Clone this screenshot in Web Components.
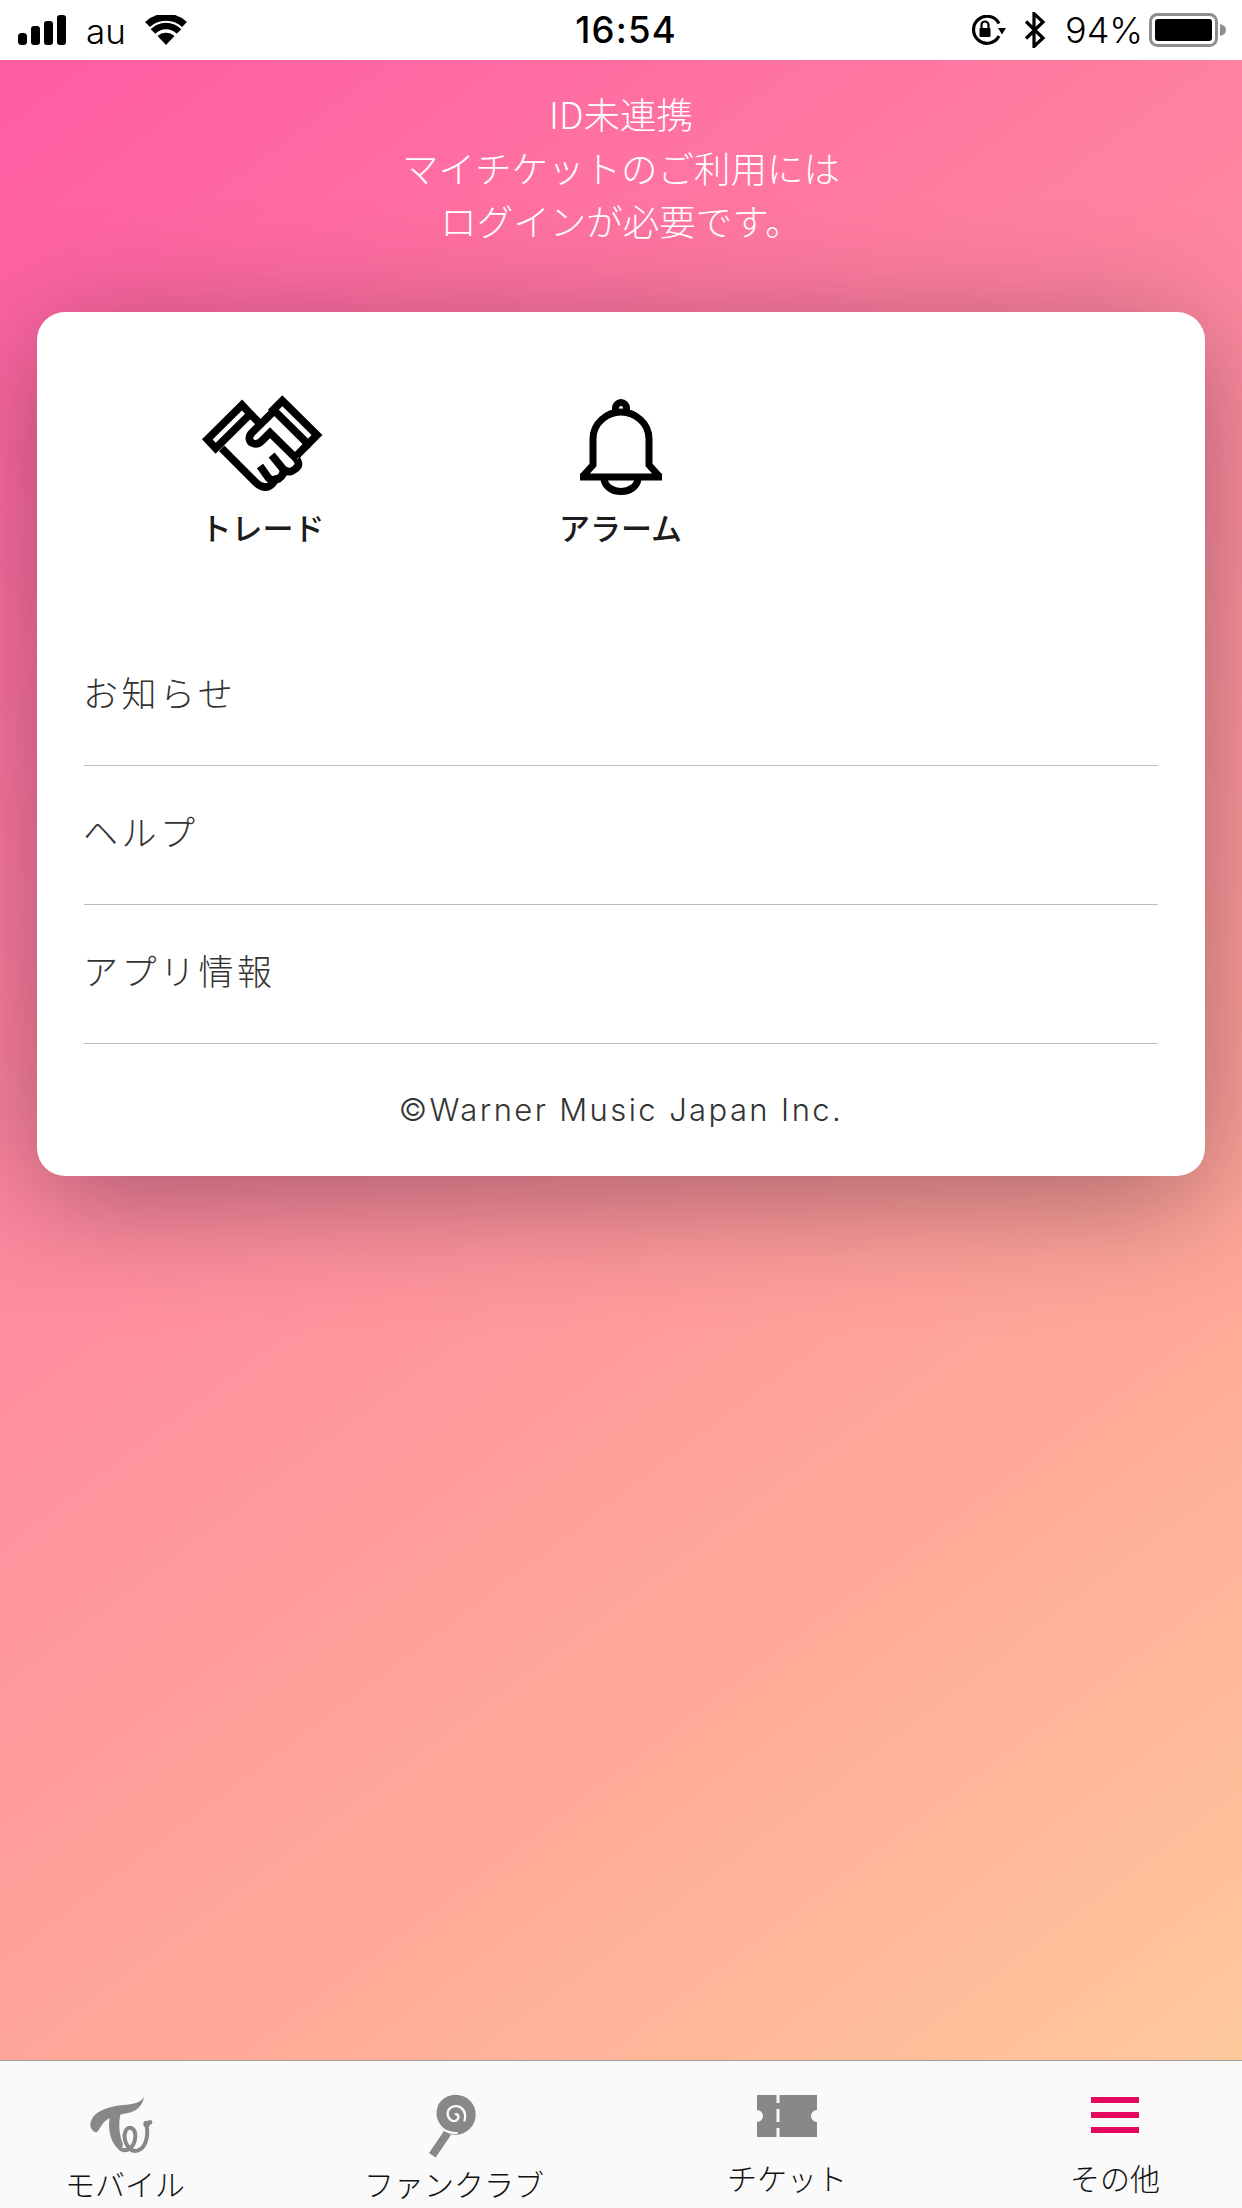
<!DOCTYPE html>
<html lang="ja"><head><meta charset="utf-8"><title>その他</title>
<style>html,body{margin:0;padding:0;background:#fff}</style></head>
<body>
<app-screen>
  <status-bar slot="status"></status-bar>
  <login-note slot="note">ID未連携<br>マイチケットのご利用には<br>ログインが必要です。</login-note>
  <menu-card slot="card">
    <shortcut-item slot="shortcut" label="トレード" icon="trade"></shortcut-item>
    <shortcut-item slot="shortcut" label="アラーム" icon="bell"></shortcut-item>
    <menu-row>お知らせ</menu-row>
    <menu-row>ヘルプ</menu-row>
    <menu-row>アプリ情報</menu-row>
    <span slot="copyright">©Warner Music Japan Inc.</span>
  </menu-card>
  <tab-bar slot="tabs"></tab-bar>
</app-screen>
<script>
const FONT = '"Noto Sans CJK JP","Noto Sans",sans-serif';
const def = (name, html, init) => customElements.define(name, class extends HTMLElement {
  constructor(){ super(); this.attachShadow({mode:'open'}).innerHTML = typeof html === 'function' ? html(this) : html; }
  connectedCallback(){ if(init) init(this); }
});

const ICONS = {
 trade:`<svg width="140" height="112" viewBox="0 0 420 336" fill="none" stroke="#000" stroke-width="23" stroke-linejoin="miter">
  <path d="M147 60 43 163 68 190 172 87Z"/>
  <path d="M268 47 372 150 345 177 241 74Z"/>
  <path d="M172 87 196 111"/>
  <path d="M243 78 178 142C164 156 168 170 180 175C190 179 198 176 206 168L231 143 311 222"/>
  <path d="M345 177 311 212"/>
  <path d="M86 190 190 294C206 310 226 310 238 296C248 284 252 278 250 270"/>
  <path d="M311 222C320 236 316 246 304 254C292 264 280 260 270 252L236 210"/>
  <path d="M270 252C274 266 268 274 256 282C242 288 232 284 226 278L201 243"/>
 </svg>`,
 bell:`<svg width="82" height="96" viewBox="0 0 82 96" fill="none" stroke="#000" stroke-width="7">
  <path d="M35.500 15V9A5.500 5.500 0 0 1 46.500 9V15"/>
  <path d="M0 78H82M3 77 13 66V40C13 24 27 13 41 13S69 24 69 40V66L79 77"/>
  <path d="M24 80C25 88 33 92.500 41 92.500S57 88 58 80"/>
 </svg>`,
 tw:`<svg width="85" height="70" viewBox="0 0 255 210" fill="#888" stroke="none">
  <path d="M198 20C194 48 176 64 146 70C112 76 86 84 72 104C64 116 60 126 53 127C38 120 32 104 42 86C58 60 95 50 130 46C160 42 186 42 198 20Z"/>
  <path d="M100 60 132 54C120 90 122 130 134 160C138 174 122 182 112 168C92 140 88 100 100 60Z"/>
  <path fill="none" stroke="#888" stroke-width="12" d="M122 170C140 192 170 176 172 140C173 112 150 105 142 125C134 148 150 188 178 182C202 176 212 140 206 108"/>
  <circle cx="206" cy="102" r="10"/><circle cx="216" cy="97" r="7"/>
 </svg>`,
 candy:`<svg width="75" height="72" viewBox="0 0 225 216" fill="none">
  <circle cx="122" cy="74" r="60" fill="#888"/>
  <path d="M98 128 52 196" stroke="#888" stroke-width="24"/>
  <path d="M66 44C50 92 82 134 128 128" stroke="#fafafa" stroke-width="6"/>
  <path d="M120 74C126 68 134 78 128 88C118 100 100 90 98 74C96 54 118 42 136 52C150 60 154 78 148 94" stroke="#fafafa" stroke-width="7"/>
 </svg>`,
 ticket:`<svg width="60" height="42" viewBox="0 0 60 42">
  <path fill="#888" d="M0 0H60V15A6 6 0 0 0 60 27V42H0V27A6 6 0 0 0 0 15Z"/>
  <path fill="#fafafa" d="M19.500 0H22.500V8H19.500ZM19.500 14H22.500V27H19.500ZM19.500 33H22.500V42H19.500Z"/>
 </svg>`,
 menu:`<svg width="48" height="36" viewBox="0 0 48 36" fill="#e5085f"><rect width="48" height="6"/><rect y="15" width="48" height="6"/><rect y="30" width="48" height="6"/></svg>`
};

def('app-screen', `<style>
 :host{display:flex;flex-direction:column;width:1242px;height:2208px;overflow:hidden;background:#fff}
 main{flex:1;display:flex;flex-direction:column;align-items:stretch;background:linear-gradient(143deg,#ff5ea3 2%,#ff8e9f 44%,#ffaa98 74%,#ffc99c 100%);}
</style><slot name="status"></slot><main><slot name="note"></slot><slot name="card"></slot></main><slot name="tabs"></slot>`);

def('status-bar', `<style>
 :host{display:grid;grid-template-columns:1fr auto 1fr;align-items:center;height:60px;padding:0 15px 0 18px;background:#fff;color:#000;font:300 36px Inter,sans-serif}
 .l,.r{display:flex;align-items:center}
 .r{justify-content:flex-end}
 .time{font:500 36.500px Inter,sans-serif;letter-spacing:1.200px;margin-left:7px}
 .au{font-size:35px;margin:0 19px 0 20px;line-height:60px;position:relative;top:1px}
 .pct{margin:0 6px 0 19px}
 svg{display:block}
</style>
<div class="l">
 <svg width="48" height="30" viewBox="0 0 48 30"><rect x="0" y="18" width="9" height="12" rx="3.500"/><rect x="13" y="11" width="9" height="19" rx="3"/><rect x="26" y="6" width="9" height="24" rx="3"/><rect x="39" y="0" width="9" height="30" rx="3"/></svg>
 <span class="au">au</span>
 <svg width="42" height="30" viewBox="0 0 42 30"><path d="M21 30 12.500 21A12.500 12.500 0 0 1 29.500 21Z"/><path fill="none" stroke="#000" stroke-width="6.500" d="M8 16.500A18 18 0 0 1 34 16.500"/><path fill="none" stroke="#000" stroke-width="7" d="M2.500 9.500A27 27 0 0 1 39.500 9.500"/></svg>
</div>
<div class="time">16:54</div>
<div class="r">
 <svg width="36" height="30" viewBox="0 0 36 30" fill="none" stroke="#000" stroke-width="3.200"><path d="M29 21A13.500 13.500 0 1 1 29 8.500"/><path fill="#000" stroke="none" d="M28 12H36L32 18.500Z" transform="translate(0,1)"/><rect x="9.500" y="13" width="11" height="9" fill="#000" stroke="none" rx="1"/><path stroke-width="2.200" d="M11.500 13.500V10A3.500 3.500 0 0 1 18.500 10V13.500"/></svg>
 <svg style="margin-left:18px" width="22" height="36" viewBox="0 0 22 36" fill="none" stroke="#000" stroke-width="3.200"><path d="M2 9.500 19 26 10 34.500V1.500L19 10 2 26.500"/></svg>
 <span class="pct">94%</span>
 <svg width="78" height="34" viewBox="0 0 78 34"><rect x="1.500" y="1.500" width="66" height="31" rx="7" fill="none" stroke="#8e8e8e" stroke-width="3"/><rect x="6" y="6" width="57" height="22" rx="3"/><path fill="#8e8e8e" d="M71 11C75 12 77 14 77 17S75 22 71 23Z"/></svg>
</div>`);

def('login-note', `<style>
 :host{display:block;height:252px;box-sizing:border-box;padding-top:27px;text-align:center;color:#fff;font:300 36.500px/53.500px ${FONT}}
</style><slot></slot>`);

def('menu-card', `<style>
 :host{display:block;margin:0 37px;height:864px;box-sizing:border-box;padding:0 47px;background:#fff;border-radius:28px;box-shadow:0 22px 120px rgba(50,20,40,.44);color:#333;font-family:${FONT}}
 .shortcuts{display:grid;grid-template-columns:repeat(3,1fr);height:315px;padding-top:83px;box-sizing:border-box;align-items:start}
 .copy{display:block;text-align:center;font:300 31px/131px Inter,${FONT};letter-spacing:2.400px}
</style>
<div class="shortcuts"><slot name="shortcut"></slot></div>
<slot></slot>
<div class="copy"><slot name="copyright"></slot></div>`);

def('shortcut-item', (el)=>`<style>
 :host{display:flex;flex-direction:column;align-items:center;color:#1c1c1c}
 .i{height:112px;display:flex;align-items:flex-start;justify-content:center}
 .t{font:500 31px/40px ${FONT};margin-left:-1px}
 .trade{margin-top:-10px}
 .bell{margin-top:4px}
</style><div class="i"><div class="${el.getAttribute('icon')}">${ICONS[el.getAttribute('icon')]}</div></div><div class="t">${el.getAttribute('label')}</div>`);

def('menu-row', `<style>
 :host{display:flex;align-items:center;height:138px;border-bottom:1px solid #bdbdbd;font:300 35px/40px ${FONT};letter-spacing:3.500px;color:#333}
 span{display:block;margin:-8px 0 0 -1px}
</style><span><slot></slot></span>`);

const TABS = [
 {l:'モバイル',i:'tw',h:73,o:-6,x:-5},
 {l:'ファンクラブ',i:'candy',h:73,o:-7,x:-2},
 {l:'チケット',i:'ticket',h:67,o:3,x:0},
 {l:'その他',i:'menu',h:67,o:5,x:0}
];
def('tab-item', (el)=>{const t=TABS[+el.getAttribute('n')];return `<style>
 :host{display:flex;flex-direction:column;align-items:center;white-space:nowrap}
 .i{height:${t.h}px;padding:${t.o+2}px 0 0;box-sizing:border-box}
 .t{font:300 30px/40px ${FONT};color:#111}
 svg{display:block;overflow:visible;margin-left:${t.x*2}px}
</style><div class="i">${ICONS[t.i]}</div><div class="t">${t.l}</div>`});

def('tab-bar', `<style>
 :host{display:grid;grid-template-columns:120px 209px 120px 213px 120px 208px 120px;height:148px;box-sizing:border-box;padding:29px 0 0 65px;background:#fafafa;border-top:1px solid rgba(60,40,30,.45)}
 tab-item:nth-of-type(2){grid-column:3} tab-item:nth-of-type(3){grid-column:5} tab-item:nth-of-type(4){grid-column:7}
</style><tab-item n="0"></tab-item><tab-item n="1"></tab-item><tab-item n="2"></tab-item><tab-item n="3"></tab-item>`);
</script>
</body></html>
